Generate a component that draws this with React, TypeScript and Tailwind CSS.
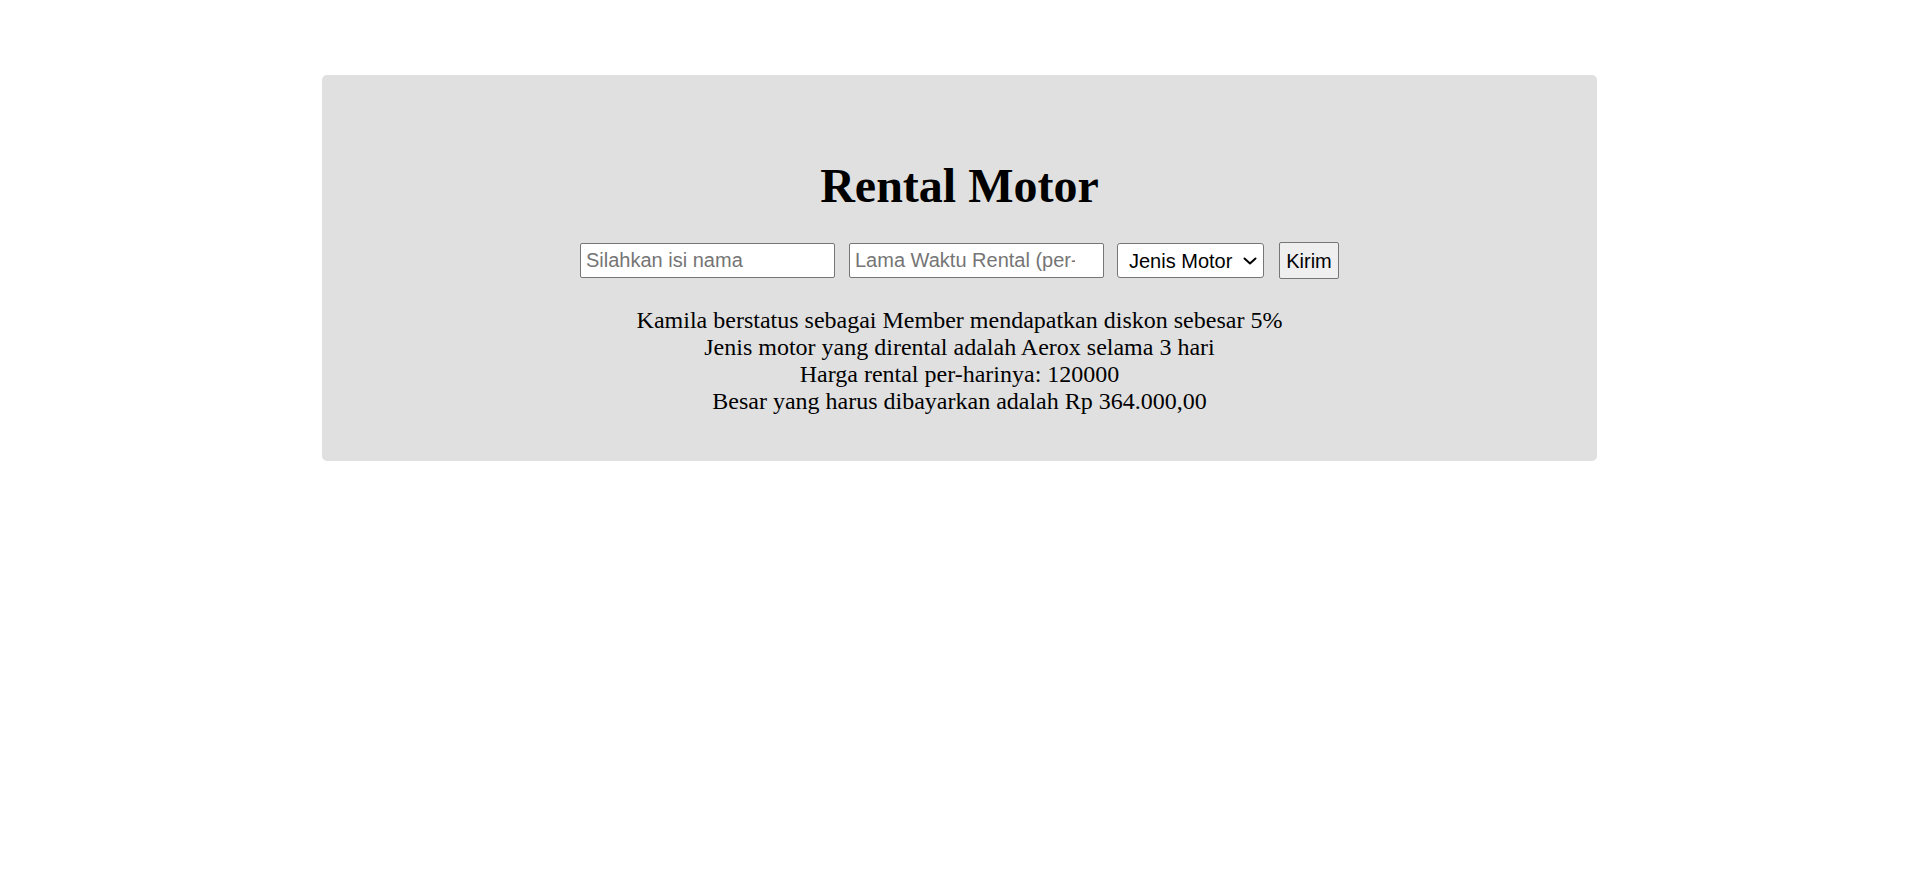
import { useState } from "react";

export default function App() {
  const [nama, setNama] = useState("");
  const [lama, setLama] = useState("");
  const [jenis, setJenis] = useState("");

  return (
    <div className="min-h-screen bg-white">
      <div className="h-[75px]" />
      <div className="mx-auto w-[1275px] rounded-[5px] bg-[#e0e0e0] pt-[83px] pb-[46px] font-['Liberation_Serif',serif] text-black">
        <h1 className="text-center text-[48px] font-bold leading-[55px]">Rental Motor</h1>

        {/* form */}
        <form
          className="mt-[29px] flex items-center justify-center font-['Liberation_Sans',Arial,sans-serif] text-[20px]"
          onSubmit={(e) => e.preventDefault()}
        >
          <input
            type="text"
            value={nama}
            onChange={(e) => setNama(e.target.value)}
            placeholder="Silahkan isi nama"
            className="h-[35px] w-[255px] rounded-[2px] border border-[#767676] bg-white px-[5px] text-black placeholder:text-[#757575]"
          />
          <input
            type="text"
            value={lama}
            onChange={(e) => setLama(e.target.value)}
            placeholder="Lama Waktu Rental (per-hari)"
            className="ml-[14px] h-[35px] w-[255px] rounded-[2px] border border-[#767676] bg-white pl-[5px] pr-[28px] text-black placeholder:text-[#757575]"
          />
          <div className="relative ml-[13px]">
            <select
              value={jenis}
              onChange={(e) => setJenis(e.target.value)}
              className="h-[35px] w-[147px] appearance-none rounded-[3px] border border-[#767676] bg-white pl-[11px] pr-[28px] text-black"
            >
              <option value="">Jenis Motor</option>
              <option value="aerox">Aerox</option>
              <option value="nmax">Nmax</option>
              <option value="vario">Vario</option>
            </select>
            <svg
              viewBox="0 0 14 8"
              width="14"
              height="8"
              fill="none"
              stroke="currentColor"
              strokeWidth="2"
              strokeLinecap="round"
              strokeLinejoin="round"
              className="pointer-events-none absolute right-[7px] top-[14px] text-black"
            >
              <path d="M1.5 1.5l5.5 5 5.5-5" />
            </svg>
          </div>
          <button
            type="submit"
            className="ml-[15px] h-[37px] w-[60px] rounded-[2px] border border-[#767676] bg-[#efefef] text-black"
          >
            Kirim
          </button>
        </form>

        {/* hasil */}
        <div className="mt-[28px] text-center text-[24px] leading-[27px]">
          <div>Kamila berstatus sebagai Member mendapatkan diskon sebesar 5%</div>
          <div>Jenis motor yang dirental adalah Aerox selama 3 hari</div>
          <div>Harga rental per-harinya: 120000</div>
          <div>Besar yang harus dibayarkan adalah Rp 364.000,00</div>
        </div>
      </div>
    </div>
  );
}
